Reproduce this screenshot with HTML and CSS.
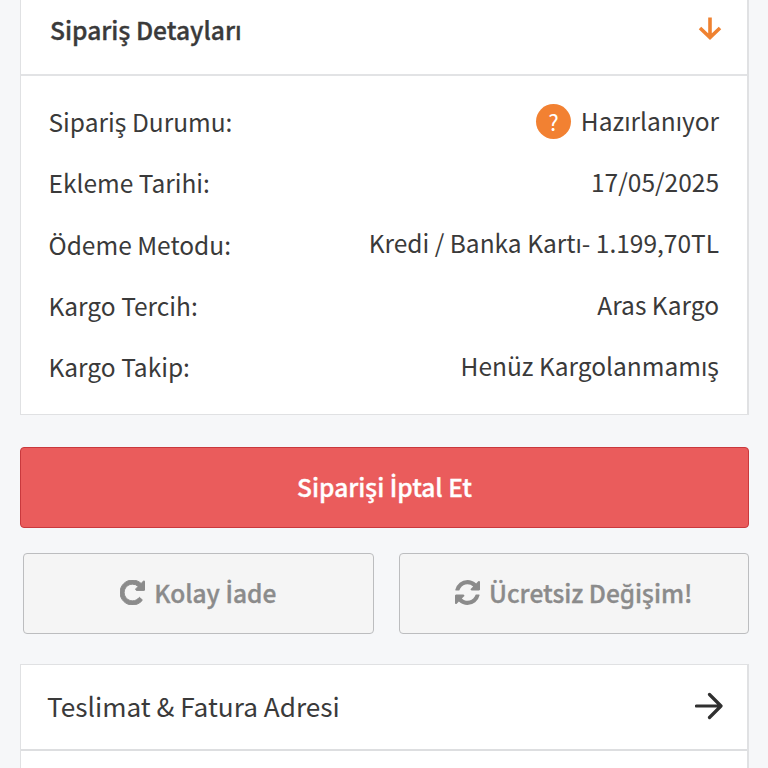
FILE: index.html
```html
<!DOCTYPE html>
<html lang="tr">
<head>
    <meta charset="UTF-8">
    <meta name="viewport" content="width=device-width, initial-scale=1.0">
    <title>Sipariş Detayları</title>
    <link rel="stylesheet" href="styles.css">
</head>
<body>
    <section class="panel">
        <div class="panel-header">
            <h2>Sipariş Detayları</h2>
            <svg class="arrow-down" viewBox="0 0 24 24"><path d="M12 1.500v19M2 12l10 9.500L22 12"/></svg>
        </div>
        <dl class="details">
            <div class="row">
                <dt>Sipariş Durumu:</dt>
                <dd><span class="help">?</span>Hazırlanıyor</dd>
            </div>
            <div class="row">
                <dt>Ekleme Tarihi:</dt>
                <dd>17/05/2025</dd>
            </div>
            <div class="row">
                <dt>Ödeme Metodu:</dt>
                <dd>Kredi / Banka Kartı- 1.199,70TL</dd>
            </div>
            <div class="row">
                <dt>Kargo Tercih:</dt>
                <dd>Aras Kargo</dd>
            </div>
            <div class="row">
                <dt>Kargo Takip:</dt>
                <dd>Henüz Kargolanmamış</dd>
            </div>
        </dl>
    </section>

    <button class="btn btn-cancel"><span>Siparişi <span class="dotted">İ</span>ptal Et</span></button>

    <div class="actions">
        <button class="btn btn-default" disabled>
            <svg class="icon" viewBox="128 128 1536 1536"><path stroke="#8b8b8b" stroke-width="60" d="M1664 256v448q0 26-19 45t-45 19h-448q-42 0-59-40-17-39 14-69l138-138q-148-137-349-137-104 0-198.500 40.500t-163.500 109.500-109.500 163.500-40.500 198.500 40.500 198.500 109.500 163.500 163.500 109.500 198.500 40.500q119 0 225-52t179-147q7-10 23-12 15 0 25 9l137 138q9 8 9.500 20.500t-7.500 22.500q-109 132-264 204.500t-327 72.500q-156 0-298-61t-245-164-164-245-61-298 61-298 164-245 245-164 298-61q147 0 284.500 55.500t244.500 156.500l130-129q29-31 70-14 39 17 39 59z"/></svg>
            <span>Kolay <span class="dotted">İ</span>ade</span>
        </button>
        <button class="btn btn-default" disabled>
            <svg class="icon" viewBox="128 128 1536 1536"><path d="M1639 1056q0 5-1 7-64 268-268 434.500t-478 166.500q-146 0-282.500-55t-243.500-157l-129 129q-19 19-45 19t-45-19-19-45v-448q0-26 19-45t45-19h448q26 0 45 19t19 45-19 45l-137 137q71 66 161 102t187 36q134 0 250-65t186-179q11-17 53-117 8-23 30-23h192q13 0 22.500 9.500t9.500 22.500zm25-800v448q0 26-19 45t-45 19h-448q-26 0-45-19t-19-45 19-45l138-138q-148-137-349-137-134 0-250 65t-186 179q-11 17-53 117-8 23-30 23h-199q-13 0-22.500-9.500t-9.500-22.500v-7q65-268 270-434.500t480-166.500q146 0 284 55.500t245 156.500l130-129q19-19 45-19t45 19 19 45z"/></svg>
            <span>Ücretsiz Değişim!</span>
        </button>
    </div>

    <section class="panel accordion">
        <div class="accordion-item">
            <span>Teslimat &amp; Fatura Adresi</span>
            <svg class="arrow-right" viewBox="0 0 28 28"><path d="M1.500 14h24M14.500 2.500L26 14 14.500 25.500"/></svg>
        </div>
    </section>
</body>
</html>
```
FILE: styles.css
```css
* { box-sizing: border-box; }
body { display: flex; flex-direction: column; margin: 0; padding: 0 19px 0 20px; height: 768px; background-color: #f6f7f9; color: #3a3a3a; font-family: "Noto Sans CJK SC", "Noto Sans", sans-serif; font-size: 24.5px; line-height: 34px; }

.panel { background-color: #fff; border: 2px solid #e0e1e3; border-width: 1px 2px 1px 1px; }
.panel:first-child { border-top: none; }
.panel-header { display: flex; justify-content: space-between; align-items: center; height: 76px; padding: 0 25px 16px 29px; border-bottom: 2px solid #e2e3e5; }
.panel-header h2 { margin: 0; font-size: 24.6px; font-weight: 500; -webkit-text-stroke: 0.35px; }
.arrow-down { width: 24px; height: 24px; margin-bottom: 2px; fill: none; stroke: #ef8231; stroke-width: 3.6; }

.details { margin: 0; padding: 15px 28px 16px 27.500px; height: 338px; }
.row { display: flex; justify-content: space-between; align-items: center; height: 61.3px; }
.row dt { padding-top: 1px; }
.row dd { display: flex; align-items: center; gap: 10px; margin: 0 0 2px; }
.help { display: flex; justify-content: center; align-items: center; width: 35px; height: 35px; margin-top: 2px; padding-bottom: 2px; border-radius: 50%; background-color: #f28132; color: #fff; font-size: 22px; }

.btn { display: flex; justify-content: center; align-items: center; gap: 9px; height: 81px; padding: 0 0 2px; border-radius: 4px; font: inherit; font-weight: 500; -webkit-text-stroke: 0.35px; }
.btn-cancel { width: 100%; margin-top: 32px; border: 1.5px solid #c9393d; background-color: #ea5c5c; color: #fff; }
.actions { display: grid; grid-template-columns: 1fr 1fr; gap: 25px; margin: 25px 0 30px 3px; }
.btn-default { border: 1.5px solid #bcbdbf; background-color: #f5f5f5; color: #8b8b8b; }
.icon { width: 25px; height: 25px; fill: #8b8b8b; }
.dotted { font-family: "Open Sans", sans-serif; font-weight: 600; line-height: 1; }

.accordion { flex: 1; border-bottom: none; }
.accordion-item { display: flex; justify-content: space-between; align-items: center; height: 86px; padding: 0 24px 2px 26px; border-bottom: 2px solid #dddee0; font-size: 26.2px; }
.arrow-right { width: 28px; height: 28px; fill: none; stroke: #303030; stroke-width: 3.2; stroke-linecap: round; stroke-linejoin: round; }
```
